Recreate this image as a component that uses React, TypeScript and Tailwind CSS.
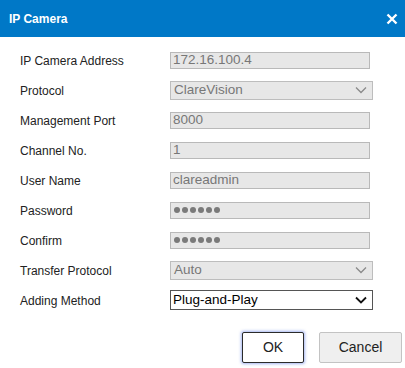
const font = { fontFamily: '"Liberation Sans", Arial, sans-serif' };

interface Field {
  label: string;
  value: string;
  kind: 'text' | 'select' | 'password' | 'active';
}

const fields: Field[] = [
  { label: 'IP Camera Address', value: '172.16.100.4', kind: 'text' },
  { label: 'Protocol', value: 'ClareVision', kind: 'select' },
  { label: 'Management Port', value: '8000', kind: 'text' },
  { label: 'Channel No.', value: '1', kind: 'text' },
  { label: 'User Name', value: 'clareadmin', kind: 'text' },
  { label: 'Password', value: '', kind: 'password' },
  { label: 'Confirm', value: '', kind: 'password' },
  { label: 'Transfer Protocol', value: 'Auto', kind: 'select' },
  { label: 'Adding Method', value: 'Plug-and-Play', kind: 'active' },
];

function Chevron({ dark }: { dark?: boolean }) {
  return (
    <svg width="12" height="8" viewBox="0 0 12 8" className="mr-[5px]">
      <path
        d="M1 1.5 L6 6.5 L11 1.5"
        fill="none"
        stroke={dark ? '#111' : '#8a8a8a'}
        strokeWidth={dark ? 1.8 : 1.3}
      />
    </svg>
  );
}

function Control({ field }: { field: Field }) {
  if (field.kind === 'active') {
    return (
      <div className="flex h-[20px] w-[203px] items-center justify-between border border-[#555] bg-white pl-[2px] text-[13.5px] text-black">
        <span>{field.value}</span>
        <Chevron dark />
      </div>
    );
  }
  if (field.kind === 'select') {
    return (
      <div className="flex h-[19px] w-[203px] items-center justify-between border border-[#bdbdbd] bg-[#e7e7e7] pl-[3px] text-[13.5px] text-[#777]">
        <span>{field.value}</span>
        <Chevron />
      </div>
    );
  }
  return (
    <div className="flex h-[17px] w-[200px] items-center border border-[#b9b9b9] bg-[#e7e7e7] pl-[2px] text-[13.5px] text-[#777]">
      {field.kind === 'password' ? (
        <div className="flex gap-[2px] pl-[1px]">
          {[0, 1, 2, 3, 4, 5].map((i) => (
            <span key={i} className="block h-[6px] w-[6px] rounded-full bg-[#7a7a7a]" />
          ))}
        </div>
      ) : (
        <span>{field.value}</span>
      )}
    </div>
  );
}

export default function App() {
  return (
    <div className="h-[368px] w-[405px] bg-white" style={font}>
      <div className="flex h-[37px] items-center justify-between bg-[#0078c7] pl-[9px] pr-[7px]">
        <span className="text-[12px] font-bold text-white">IP Camera</span>
        <svg width="12" height="12" viewBox="0 0 12 12" className="mt-[1px]">
          <path d="M1.5 1.5 L10.5 10.5 M10.5 1.5 L1.5 10.5" stroke="#fff" strokeWidth="2.4" />
        </svg>
      </div>

      <div className="pt-[8px]">
        {fields.map((f) => (
          <div key={f.label} className="flex h-[30px] items-center">
            <div className="w-[170px] pl-[20px] pt-[1px] text-[12px] text-[#222]">{f.label}</div>
            <Control field={f} />
          </div>
        ))}
      </div>

      <div className="mt-[17px] flex justify-end gap-[15px] pr-[3px]">
        <button className="h-[31px] w-[62px] rounded-[2px] border border-[#2b2b2b] bg-white text-[14px] text-[#222] shadow-[0_0_3px_1px_rgba(90,120,230,0.55)]">
          OK
        </button>
        <button className="h-[31px] w-[83px] rounded-[2px] border border-[#c3c3c3] bg-[#efefef] text-[14px] text-[#222]">
          Cancel
        </button>
      </div>
    </div>
  );
}
